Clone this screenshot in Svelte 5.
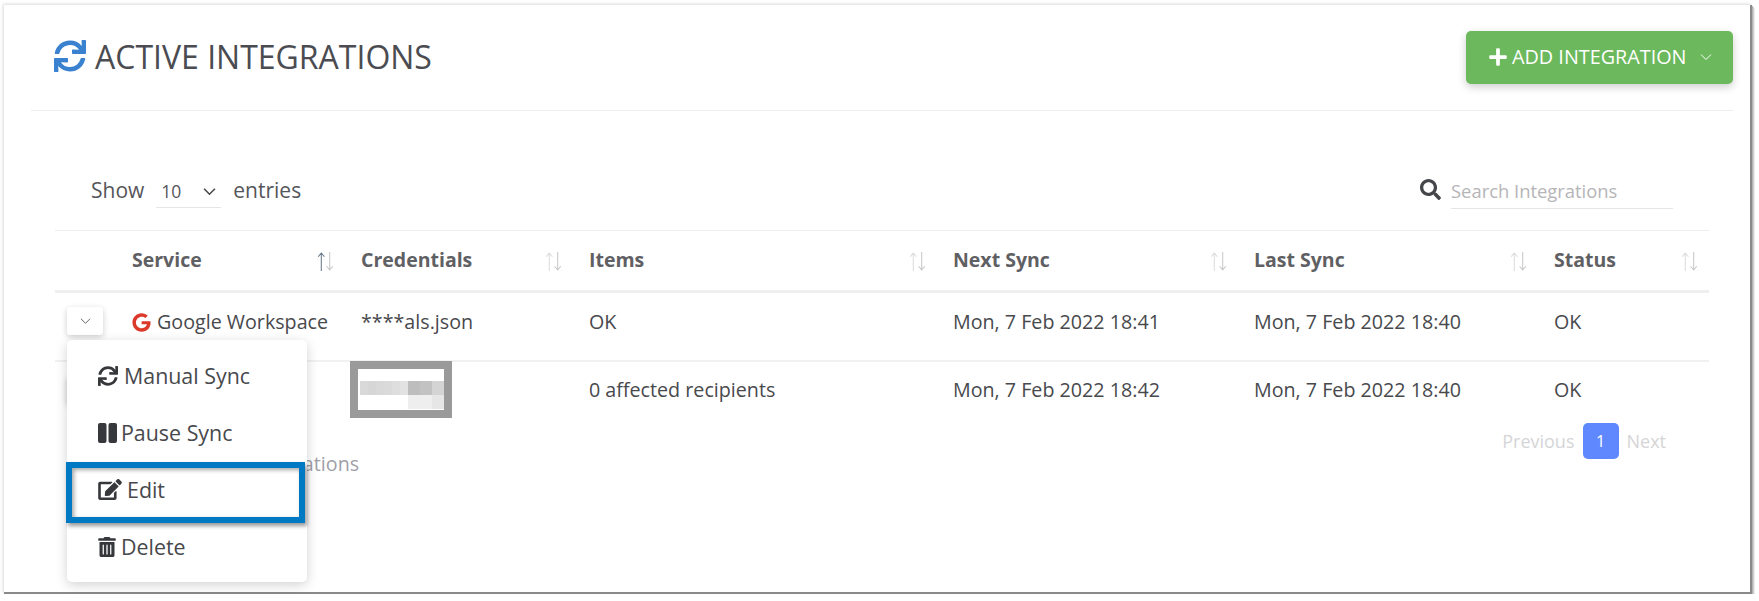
<script>
  const syncPath = 'M440.65 12.57l4 82.77A247.16 247.16 0 0 0 255.83 8C134.73 8 33.91 94.92 12.29 209.82A12 12 0 0 0 24.09 224h49.05a12 12 0 0 0 11.67-9.26 175.91 175.91 0 0 1 317-56.94l-101.46-4.86a12 12 0 0 0-12.57 12v47.41a12 12 0 0 0 12 12H500a12 12 0 0 0 12-12V12a12 12 0 0 0-12-12h-47.37a12 12 0 0 0-11.98 12.57zM255.83 432a175.61 175.61 0 0 1-146-77.8l101.8 4.87a12 12 0 0 0 12.57-12v-47.4a12 12 0 0 0-12-12H12a12 12 0 0 0-12 12V500a12 12 0 0 0 12 12h47.35a12 12 0 0 0 12-12.6l-4.15-82.57A247.17 247.17 0 0 0 255.83 504c121.11 0 221.93-86.92 243.55-201.82a12 12 0 0 0-11.8-14.18h-49.05a12 12 0 0 0-11.67 9.26A175.86 175.86 0 0 1 255.83 432z';

  const columns = [
    { label: '', width: 61, sortable: false },
    { label: 'Service', width: 229, sortable: true, active: true },
    { label: 'Credentials', width: 228, sortable: true },
    { label: 'Items', width: 364, sortable: true },
    { label: 'Next Sync', width: 301, sortable: true },
    { label: 'Last Sync', width: 300, sortable: true },
    { label: 'Status', width: 171, sortable: true }
  ];

  const rows = [
    { service: 'Google Workspace', google: true, cred: '****als.json', items: 'OK', next: 'Mon, 7 Feb 2022 18:41', last: 'Mon, 7 Feb 2022 18:40', status: 'OK' },
    { service: '', google: false, cred: '', items: '0 affected recipients', next: 'Mon, 7 Feb 2022 18:42', last: 'Mon, 7 Feb 2022 18:40', status: 'OK' }
  ];

  // pixelated patch over the blurred credential
  const blurTop = [
    { w: 8, c: '#d9d9d9' }, { w: 8, c: '#d6d6d6' }, { w: 8, c: '#d9d9d9' }, { w: 8, c: '#dadada' },
    { w: 8, c: '#dedede' }, { w: 8, c: '#e2e2e2' }, { w: 12, c: '#bdbdbd' }, { w: 12, c: '#c2c2c2' },
    { w: 12, c: '#d4d4d4' }
  ];
  const blurBottom = [
    { w: 24, c: '#eeeeee' }, { w: 12, c: '#e6e6e6' }
  ];
</script>

<div class="card">
  <header class="head">
    <h1>
      <svg class="title-icon" viewBox="0 0 512 512"><path d={syncPath} /></svg>
      ACTIVE INTEGRATIONS
    </h1>
    <button class="add">
      <svg class="plus" viewBox="0 0 448 512"><path d="M416 208H272V64c0-17.67-14.33-32-32-32h-32c-17.67 0-32 14.33-32 32v144H32c-17.67 0-32 14.33-32 32v32c0 17.67 14.33 32 32 32h144v144c0 17.67 14.33 32 32 32h32c17.67 0 32-14.33 32-32V304h144c17.67 0 32-14.33 32-32v-32c0-17.67-14.33-32-32-32z" /></svg>
      <span>ADD INTEGRATION</span>
      <svg class="chev-light" viewBox="0 0 12 8"><path d="M1 1.5l5 5 5-5" /></svg>
    </button>
  </header>

  <div class="body">
    <div class="controls">
      <div class="length">
        Show
        <span class="select">10
          <svg viewBox="0 0 12 8"><path d="M1 1.5l5 5 5-5" /></svg>
        </span>
        entries
      </div>
      <div class="search">
        <svg viewBox="0 0 512 512"><path d="M505 442.7L405.3 343c-4.5-4.5-10.6-7-17-7H372c27.6-35.3 44-79.7 44-128C416 93.1 322.9 0 208 0S0 93.1 0 208s93.1 208 208 208c48.3 0 92.7-16.4 128-44v16.3c0 6.4 2.5 12.5 7 17l99.7 99.7c9.4 9.4 24.6 9.4 33.9 0l28.3-28.3c9.4-9.4 9.4-24.6.1-34zM208 336c-70.7 0-128-57.2-128-128 0-70.7 57.2-128 128-128 70.7 0 128 57.2 128 128 0 70.7-57.2 128-128 128z" /></svg>
        <span class="field">Search Integrations</span>
      </div>
    </div>

    <table>
      <colgroup>
        {#each columns as col}
          <col style="width: {col.width}px" />
        {/each}
      </colgroup>
      <thead>
        <tr>
          {#each columns as col}
            <th>
              {#if col.sortable}
                <div class="th-inner">
                  <span>{col.label}</span>
                  <svg class="sort" viewBox="0 0 18 20">
                    <path class={col.active ? 'up on' : 'up'} d="M5 19V2M2 5.5L5 2l3 3.5" />
                    <path class="down" d="M13 1v17M10 14.5l3 3.5 3-3.5" />
                  </svg>
                </div>
              {/if}
            </th>
          {/each}
        </tr>
      </thead>
      <tbody>
        {#each rows as row, i}
          <tr>
            <td class="toggle">
              <button class="chev-btn" aria-label="Actions">
                <svg viewBox="0 0 12 8"><path d="M1 1.5l5 5 5-5" /></svg>
              </button>
            </td>
            <td>
              {#if row.google}
                <span class="service">
                  <svg class="g" viewBox="0 0 488 512"><path d="M488 261.8C488 403.3 391.1 504 248 504 110.8 504 0 393.2 0 256S110.8 8 248 8c66.8 0 123 24.5 166.3 64.9l-67.5 64.9C258.5 52.6 94.3 116.6 94.3 256c0 86.5 69.1 156.6 153.7 156.6 98.2 0 135-70.4 140.8-106.9H248v-85.3h236.1c2.3 12.7 3.9 24.9 3.9 41.4z" /></svg>
                  {row.service}
                </span>
              {/if}
            </td>
            <td>{row.cred}</td>
            <td>{row.items}</td>
            <td>{row.next}</td>
            <td>{row.last}</td>
            <td>{row.status}</td>
          </tr>
        {/each}
      </tbody>
    </table>

    <div class="foot">
      <div class="info">Showing 1 to 2 of 2 Integrations</div>
      <div class="pager">
        <span>Previous</span>
        <span class="page">1</span>
        <span>Next</span>
      </div>
    </div>
  </div>

  <div class="redact">
    <div class="blur">
      {#each blurTop as cell}
        <i style="width: {cell.w}px; background: {cell.c}"></i>
      {/each}
    </div>
    <div class="blur low">
      {#each blurBottom as cell}
        <i style="width: {cell.w}px; background: {cell.c}"></i>
      {/each}
    </div>
  </div>

  <ul class="menu">
    <li>
      <svg class="sync" viewBox="0 0 512 512"><path d={syncPath} /></svg>
      Manual Sync
    </li>
    <li>
      <svg class="pause" viewBox="0 0 19 20"><rect width="8.5" height="20" rx="2" /><rect x="10.5" width="8.5" height="20" rx="2" /></svg>
      Pause Sync
    </li>
    <li>
      <svg class="edit" viewBox="0 0 576 512"><path d="M402.6 83.2l90.2 90.2c3.8 3.8 3.8 10 0 13.8L274.4 405.6l-92.8 10.3c-12.4 1.4-22.9-9.1-21.5-21.5l10.3-92.8L388.8 83.2c3.8-3.8 10-3.8 13.8 0zm162-22.9l-48.8-48.8c-15.2-15.2-39.9-15.2-55.2 0l-35.4 35.4c-3.8 3.8-3.8 10 0 13.8l90.2 90.2c3.8 3.8 10 3.8 13.8 0l35.4-35.4c15.2-15.3 15.2-40 0-55.2zM384 346.2V448H64V128h229.8c3.2 0 6.2-1.3 8.5-3.5l40-40c7.6-7.6 2.2-20.5-8.5-20.5H48C21.5 64 0 85.5 0 112v352c0 26.5 21.5 48 48 48h352c26.5 0 48-21.5 48-48V306.2c0-10.7-12.9-16-20.5-8.5l-40 40c-2.2 2.3-3.5 5.3-3.5 8.5z" /></svg>
      Edit
    </li>
    <li>
      <svg class="trash" viewBox="0 0 448 512"><path d="M32 464a48 48 0 0 0 48 48h288a48 48 0 0 0 48-48V128H32zm272-256a16 16 0 0 1 32 0v224a16 16 0 0 1-32 0zm-96 0a16 16 0 0 1 32 0v224a16 16 0 0 1-32 0zm-96 0a16 16 0 0 1 32 0v224a16 16 0 0 1-32 0zM432 32H312l-9.4-18.7A24 24 0 0 0 281.1 0H166.8a23.72 23.72 0 0 0-21.4 13.3L136 32H16A16 16 0 0 0 0 48v32a16 16 0 0 0 16 16h416a16 16 0 0 0 16-16V48a16 16 0 0 0-16-16z" /></svg>
      Delete
    </li>
  </ul>

  <div class="highlight"></div>
</div>

<style>
  :global(body) {
    background: #fff;
    font-family: "Open Sans", "Liberation Sans", sans-serif;
    color: #48494d;
  }
  .card {
    position: relative;
    box-sizing: content-box;
    width: 1746px;
    height: 587px;
    margin: 5px 0 0 4px;
    background: #fff;
    border-right: 2px solid #8a8a8a;
    border-bottom: 2px solid #8a8a8a;
    box-shadow:
      1px 1px 0 #b4b4b4,
      2px 2px 0 #d0d0d0,
      3px 3px 0 #ececec,
      -1px -1px 3px rgba(0, 0, 0, 0.15);
    font-size: 19.7px;
  }
  .head {
    display: flex;
    justify-content: space-between;
    align-items: flex-start;
    margin: 0 17px 0 27px;
    height: 105px;
    border-bottom: 1px solid #eeeeee;
  }
  h1 {
    display: flex;
    align-items: center;
    gap: 9px;
    margin: 32px 0 0 23px;
    font-size: 32px;
    line-height: 40px;
    font-weight: 400;
    color: #4b4c51;
  }
  .title-icon {
    width: 32px;
    height: 32px;
    margin-top: -2px;
    fill: #3a82d0;
  }
  .add {
    display: flex;
    align-items: center;
    width: 267px;
    height: 53px;
    margin-top: 26px;
    padding: 0 0 2px 23px;
    box-sizing: border-box;
    border: 0;
    border-radius: 5px;
    background: #6cb85c;
    color: #fff;
    font: 19.8px "Open Sans", sans-serif;
    box-shadow: 0 3px 8px rgba(0, 0, 0, 0.2);
  }
  .plus {
    width: 18px;
    height: 20px;
    margin-right: 5px;
    fill: #fff;
  }
  .chev-light {
    width: 12px;
    height: 8px;
    margin-left: 14px;
    fill: none;
    stroke: #fff;
    stroke-width: 1;
  }
  .body {
    margin-left: 51px;
    width: 1654px;
  }
  .controls {
    display: flex;
    justify-content: space-between;
    height: 119px;
    box-sizing: border-box;
    padding: 64px 36px 0 36px;
  }
  .length {
    display: flex;
    align-items: flex-start;
    gap: 12px;
    height: 44px;
    font-size: 21px;
    line-height: 31px;
    color: #55565a;
  }
  .select {
    display: flex;
    align-items: center;
    justify-content: space-between;
    box-sizing: border-box;
    width: 65px;
    height: 33px;
    padding: 0 5px;
    font-size: 17.5px;
    border-bottom: 1px solid #e6e6e6;
  }
  .select svg {
    width: 13px;
    height: 9px;
    fill: none;
    stroke: #48494d;
    stroke-width: 1.5;
  }
  .search {
    display: flex;
    align-items: flex-start;
    gap: 10px;
  }
  .search svg {
    width: 21px;
    height: 21px;
    margin-top: 4px;
    fill: #45464a;
  }
  .field {
    width: 222px;
    height: 33px;
    font-size: 18.4px;
    line-height: 31px;
    border-bottom: 1px solid #e6e6e6;
    color: #b5b5b8;
  }
  table {
    width: 1654px;
    table-layout: fixed;
    border-collapse: collapse;
    border-top: 1px solid #eeeeee;
  }
  th {
    height: 57px;
    padding: 0 10px 2px 16px;
    text-align: left;
    font-weight: 700;
    font-size: 19.5px;
    color: #5f6063;
    border-bottom: 3px solid #efefef;
  }
  .th-inner {
    display: flex;
    justify-content: space-between;
    align-items: center;
  }
  .sort {
    width: 19px;
    height: 21px;
    margin-top: 4px;
    fill: none;
    stroke-width: 1;
  }
  .sort .up,
  .sort .down {
    stroke: #dcdcdc;
  }
  .sort .up.on {
    stroke: #6b7a8c;
  }
  .sort .down {
    stroke: #c8c8c8;
  }
  td {
    padding: 15px 16px 0;
    height: 43px;
    line-height: 26px;
    vertical-align: top;
    border-bottom: 2px solid #f1f1f1;
    white-space: nowrap;
  }
  tbody tr:first-child td {
    padding-top: 16px;
    height: 51px;
  }
  tbody tr:last-child td {
    border-bottom: 0;
  }
  td.toggle,
  tbody tr:first-child td.toggle {
    padding: 14px 0 0 12px;
  }
  .chev-btn {
    display: flex;
    align-items: center;
    justify-content: center;
    width: 36px;
    height: 28px;
    padding: 0;
    border: 0;
    border-radius: 3px;
    background: #fff;
    box-shadow: 0 2px 6px rgba(0, 0, 0, 0.2);
  }
  .chev-btn svg {
    width: 11px;
    height: 8px;
    fill: none;
    stroke: #55565a;
    stroke-width: 1;
  }
  .service {
    display: flex;
    align-items: center;
    gap: 6px;
  }
  .g {
    width: 19px;
    height: 19px;
    fill: #db3a2b;
  }
  .foot {
    display: flex;
    justify-content: space-between;
    padding: 3px 43px 0 14px;
  }
  .info {
    margin-top: 28px;
    color: #a0a0a8;
    line-height: 26px;
  }
  .pager {
    display: flex;
    align-items: center;
    gap: 8px;
    height: 36px;
    font-size: 18px;
    color: #d5d5d7;
  }
  .page {
    width: 36px;
    height: 36px;
    line-height: 36px;
    text-align: center;
    border-radius: 5px;
    background: #5f88ff;
    color: #fff;
    font-size: 16px;
  }
  .redact {
    position: absolute;
    left: 346px;
    top: 356px;
    box-sizing: border-box;
    width: 102px;
    height: 57px;
    border: 8px solid #9a9a9a;
    background: #fff;
    padding-top: 12px;
  }
  .blur {
    display: flex;
    height: 14px;
    margin-left: 2px;
  }
  .blur.low {
    margin-left: 50px;
  }
  .blur i {
    display: block;
    height: 14px;
  }
  .menu {
    position: absolute;
    left: 63px;
    top: 335px;
    box-sizing: border-box;
    width: 240px;
    height: 242px;
    margin: 0;
    padding: 7px 0 0;
    list-style: none;
    background: #fff;
    border-radius: 5px;
    box-shadow: 0 3px 12px rgba(0, 0, 0, 0.18);
  }
  .menu li {
    display: flex;
    align-items: center;
    gap: 5px;
    height: 57px;
    padding-left: 31px;
    font-size: 21.4px;
    color: #48494d;
  }
  .menu svg {
    fill: #37383b;
  }
  .sync {
    width: 20px;
    height: 20px;
    margin-right: 1px;
  }
  .pause {
    width: 19px;
    height: 20px;
    margin-right: -1px;
  }
  .edit {
    width: 24px;
    height: 21px;
  }
  .trash {
    width: 18px;
    height: 20px;
  }
  .highlight {
    position: absolute;
    left: 62px;
    top: 457px;
    box-sizing: border-box;
    width: 239px;
    height: 61px;
    border: 6px solid #0079c4;
    box-shadow: 2px 3px 4px rgba(0, 0, 0, 0.4), inset 2px 2px 4px rgba(0, 0, 0, 0.35);
  }
</style>
